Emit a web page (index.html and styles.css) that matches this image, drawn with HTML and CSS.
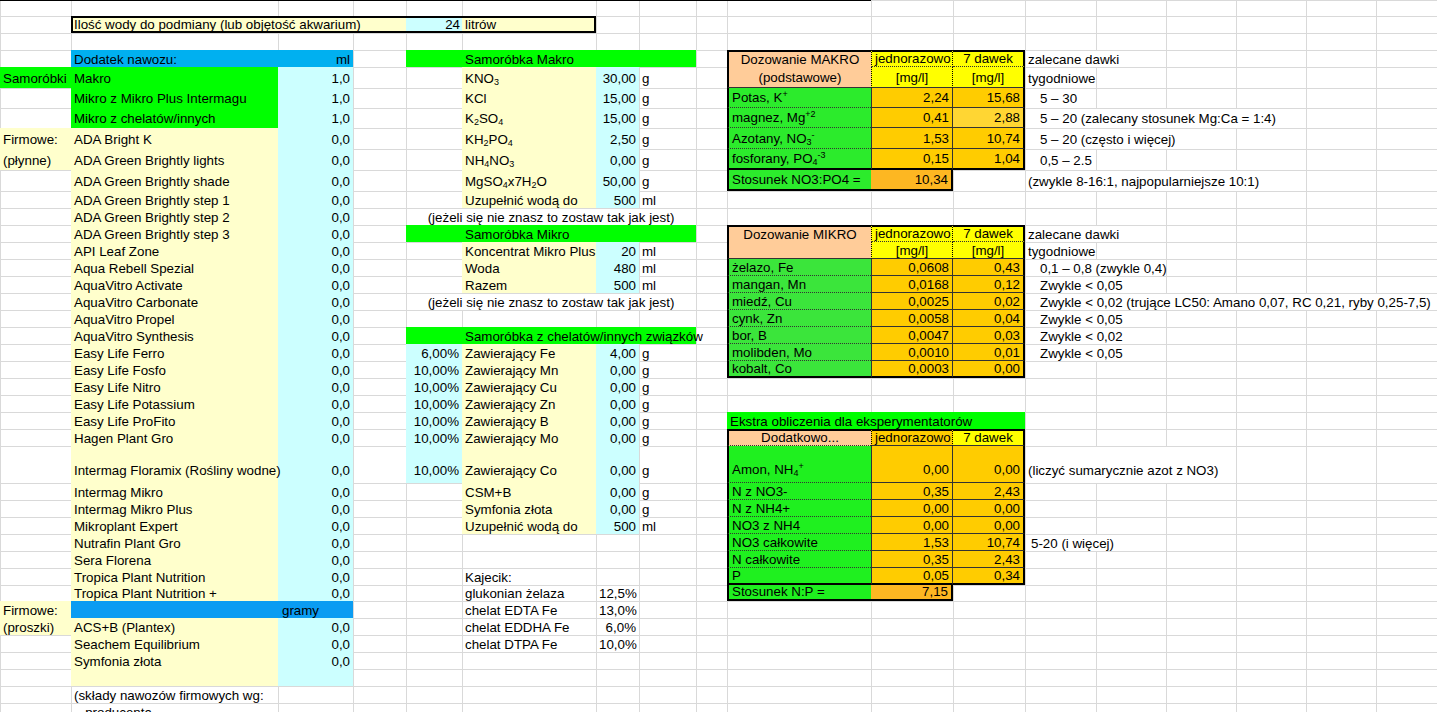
FILE: index.html
```html
<!DOCTYPE html>
<html lang="pl">
<head>
<meta charset="utf-8">
<title>Nawozy</title>
<link rel="stylesheet" href="styles.css">
</head>
<body>
<div class="topline"></div>
<table class="sheet">
<colgroup>
<col class="cA"><col class="cB"><col class="cC"><col class="cD"><col class="cE"><col class="cF"><col class="cG"><col class="cH"><col class="cI"><col class="cJ"><col class="cK"><col class="cL"><col class="cM"><col class="cN"><col class="cN"><col class="cN"><col class="cN"><col class="cN">
</colgroup>
<tbody>
<tr class="r1 h15"><td></td><td></td><td></td><td></td><td></td><td></td><td></td><td></td><td></td><td></td><td></td><td></td><td></td><td></td><td></td><td></td><td></td><td></td></tr>
<tr><td></td><td colspan="3" class="y box Bt Bb Bl">Ilość wody do podmiany (lub objętość akwarium)</td><td class="c r box Bt Bb">24</td><td class="y box Bt Bb Br">litrów</td><td></td><td></td><td></td><td></td><td></td><td></td><td></td><td></td><td></td><td></td><td></td><td></td></tr>
<tr><td></td><td></td><td></td><td></td><td></td><td></td><td></td><td></td><td></td><td></td><td></td><td></td><td></td><td></td><td></td><td></td><td></td><td></td></tr>
<tr><td></td><td class="blu">Dodatek nawozu:</td><td class="blu r">ml</td><td></td><td class="g"></td><td colspan="3" class="g">Samoróbka Makro</td><td></td><td class="pe ctr Bt Bl">Dozowanie MAKRO</td><td class="ye ctr Bt dl dr db">jednorazowo</td><td class="ye ctr Bt Br db">7 dawek</td><td colspan="2">zalecane dawki</td><td></td><td></td><td></td><td></td></tr>
<tr class="h21"><td class="g">Samoróbki</td><td class="g">Makro</td><td class="c r">1,0</td><td></td><td></td><td class="y">KNO<sub>3</sub></td><td class="c r">30,00</td><td>g</td><td></td><td class="pe ctr Bl sb">(podstawowe)</td><td class="ye ctr dl dr sb">[mg/l]</td><td class="ye ctr Br sb">[mg/l]</td><td>tygodniowe</td><td></td><td></td><td></td><td></td><td></td></tr>
<tr class="h20"><td></td><td class="g">Mikro z Mikro Plus Intermagu</td><td class="c r">1,0</td><td></td><td></td><td class="y">KCl</td><td class="c r">15,00</td><td>g</td><td></td><td class="tg Bl db">Potas, K<sup>+</sup></td><td class="or r sl sr sb">2,24</td><td class="or r Br sb">15,68</td><td class="ind">5 – 30</td><td></td><td></td><td></td><td></td><td></td></tr>
<tr class="h20"><td></td><td class="g">Mikro z chelatów/innych</td><td class="c r">1,0</td><td></td><td></td><td class="y">K<sub>2</sub>SO<sub>4</sub></td><td class="c r">15,00</td><td>g</td><td></td><td class="tg Bl db">magnez, Mg<sup>+2</sup></td><td class="or r sl sr sb">0,41</td><td class="orl r Br sb">2,88</td><td colspan="4" class="ind">5 – 20 (zalecany stosunek Mg:Ca = 1:4)</td><td></td><td></td></tr>
<tr class="h21"><td class="y">Firmowe:</td><td class="y">ADA Bright K</td><td class="c r">0,0</td><td></td><td></td><td class="y">KH<sub>2</sub>PO<sub>4</sub></td><td class="c r">2,50</td><td>g</td><td></td><td class="tg Bl db">Azotany, NO<sub>3</sub><sup>-</sup></td><td class="or r sl sr sb">1,53</td><td class="or r Br sb">10,74</td><td colspan="3" class="ind">5 – 20 (często i więcej)</td><td></td><td></td><td></td></tr>
<tr class="h21"><td class="y">(płynne)</td><td class="y">ADA Green Brightly lights</td><td class="c r">0,0</td><td></td><td></td><td class="y">NH<sub>4</sub>NO<sub>3</sub></td><td class="c r">0,00</td><td>g</td><td></td><td class="tg Bl Bb">fosforany, PO<sub>4</sub><sup>-3</sup></td><td class="or r sl sr Bb">0,15</td><td class="or r Br Bb">1,04</td><td class="ind">0,5 – 2.5</td><td></td><td></td><td></td><td></td><td></td></tr>
<tr class="h21"><td></td><td class="y">ADA Green Brightly shade</td><td class="c r">0,0</td><td></td><td></td><td class="y">MgSO<sub>4</sub>x7H<sub>2</sub>O</td><td class="c r">50,00</td><td>g</td><td></td><td class="tg Bl Bb">Stosunek NO3:PO4 =</td><td class="or2 r Br Bb">10,34</td><td></td><td colspan="4">(zwykle 8-16:1, najpopularniejsze 10:1)</td><td></td><td></td></tr>
<tr><td></td><td class="y">ADA Green Brightly step 1</td><td class="c r">0,0</td><td></td><td></td><td class="y">Uzupełnić wodą do</td><td class="c r">500</td><td>ml</td><td></td><td></td><td></td><td></td><td></td><td></td><td></td><td></td><td></td><td></td></tr>
<tr><td></td><td class="y">ADA Green Brightly step 2</td><td class="c r">0,0</td><td></td><td colspan="4" class="ctr">(jeżeli się nie znasz to zostaw tak jak jest)</td><td></td><td></td><td></td><td></td><td></td><td></td><td></td><td></td><td></td><td></td></tr>
<tr><td></td><td class="y">ADA Green Brightly step 3</td><td class="c r">0,0</td><td></td><td class="g"></td><td colspan="3" class="g">Samoróbka Mikro</td><td></td><td class="pe ctr Bt Bl">Dozowanie MIKRO</td><td class="ye ctr Bt dl dr db">jednorazowo</td><td class="ye ctr Bt Br db">7 dawek</td><td colspan="2">zalecane dawki</td><td></td><td></td><td></td><td></td></tr>
<tr><td></td><td class="y">API Leaf Zone</td><td class="c r">0,0</td><td></td><td></td><td class="y">Koncentrat Mikro Plus</td><td class="c r">20</td><td>ml</td><td></td><td class="pe Bl sb"></td><td class="ye ctr dl dr sb">[mg/l]</td><td class="ye ctr Br sb">[mg/l]</td><td>tygodniowe</td><td></td><td></td><td></td><td></td><td></td></tr>
<tr><td></td><td class="y">Aqua Rebell Spezial</td><td class="c r">0,0</td><td></td><td></td><td class="y">Woda</td><td class="c r">480</td><td>ml</td><td></td><td class="tg2 Bl db">żelazo, Fe</td><td class="or r sl sr sb">0,0608</td><td class="or r Br sb">0,43</td><td colspan="2" class="ind">0,1 – 0,8 (zwykle 0,4)</td><td></td><td></td><td></td><td></td></tr>
<tr><td></td><td class="y">AquaVitro Activate</td><td class="c r">0,0</td><td></td><td></td><td class="y">Razem</td><td class="c r">500</td><td>ml</td><td></td><td class="tg2 Bl db">mangan, Mn</td><td class="or r sl sr sb">0,0168</td><td class="or r Br sb">0,12</td><td colspan="2" class="ind">Zwykle &lt; 0,05</td><td></td><td></td><td></td><td></td></tr>
<tr><td></td><td class="y">AquaVitro Carbonate</td><td class="c r">0,0</td><td></td><td colspan="4" class="ctr">(jeżeli się nie znasz to zostaw tak jak jest)</td><td></td><td class="tg2 Bl db">miedź, Cu</td><td class="or r sl sr sb">0,0025</td><td class="or r Br sb">0,02</td><td colspan="6" class="ind">Zwykle &lt; 0,02 (trujące LC50: Amano 0,07, RC 0,21, ryby 0,25-7,5)</td></tr>
<tr><td></td><td class="y">AquaVitro Propel</td><td class="c r">0,0</td><td></td><td></td><td></td><td></td><td></td><td></td><td class="tg2 Bl db">cynk, Zn</td><td class="or r sl sr sb">0,0058</td><td class="or r Br sb">0,04</td><td colspan="2" class="ind">Zwykle &lt; 0,05</td><td></td><td></td><td></td><td></td></tr>
<tr><td></td><td class="y">AquaVitro Synthesis</td><td class="c r">0,0</td><td></td><td class="g"></td><td colspan="3" class="g">Samoróbka z chelatów/innych związków</td><td></td><td class="tg2 Bl db">bor, B</td><td class="or r sl sr sb">0,0047</td><td class="or r Br sb">0,03</td><td colspan="2" class="ind">Zwykle &lt; 0,02</td><td></td><td></td><td></td><td></td></tr>
<tr><td></td><td class="y">Easy Life Ferro</td><td class="c r">0,0</td><td></td><td class="c r">6,00%</td><td class="y">Zawierający Fe</td><td class="c r">4,00</td><td>g</td><td></td><td class="tg2 Bl db">molibden, Mo</td><td class="or r sl sr sb">0,0010</td><td class="or r Br sb">0,01</td><td colspan="2" class="ind">Zwykle &lt; 0,05</td><td></td><td></td><td></td><td></td></tr>
<tr><td></td><td class="y">Easy Life Fosfo</td><td class="c r">0,0</td><td></td><td class="c r">10,00%</td><td class="y">Zawierający Mn</td><td class="c r">0,00</td><td>g</td><td></td><td class="tg2 Bl Bb">kobalt, Co</td><td class="or r sl sr Bb">0,0003</td><td class="or r Br Bb">0,00</td><td></td><td></td><td></td><td></td><td></td><td></td></tr>
<tr><td></td><td class="y">Easy Life Nitro</td><td class="c r">0,0</td><td></td><td class="c r">10,00%</td><td class="y">Zawierający Cu</td><td class="c r">0,00</td><td>g</td><td></td><td></td><td></td><td></td><td></td><td></td><td></td><td></td><td></td><td></td></tr>
<tr><td></td><td class="y">Easy Life Potassium</td><td class="c r">0,0</td><td></td><td class="c r">10,00%</td><td class="y">Zawierający Zn</td><td class="c r">0,00</td><td>g</td><td></td><td></td><td></td><td></td><td></td><td></td><td></td><td></td><td></td><td></td></tr>
<tr><td></td><td class="y">Easy Life ProFito</td><td class="c r">0,0</td><td></td><td class="c r">10,00%</td><td class="y">Zawierający B</td><td class="c r">0,00</td><td>g</td><td></td><td colspan="3" class="g">Ekstra obliczenia dla eksperymentatorów</td><td></td><td></td><td></td><td></td><td></td><td></td></tr>
<tr><td></td><td class="y">Hagen Plant Gro</td><td class="c r">0,0</td><td></td><td class="c r">10,00%</td><td class="y">Zawierający Mo</td><td class="c r">0,00</td><td>g</td><td></td><td class="pe ctr Bt Bl db">Dodatkowo...</td><td class="or ctr Bt dl dr sb">jednorazowo</td><td class="ye ctr Bt Br sb">7 dawek</td><td></td><td></td><td></td><td></td><td></td><td></td></tr>
<tr class="h37"><td></td><td class="y">Intermag Floramix (Rośliny wodne)</td><td class="c r">0,0</td><td></td><td class="c r">10,00%</td><td class="y">Zawierający Co</td><td class="c r">0,00</td><td>g</td><td></td><td class="tg3 Bl db">Amon, NH<sub>4</sub><sup>+</sup></td><td class="or r sl sr sb">0,00</td><td class="or r Br sb">0,00</td><td colspan="3">(liczyć sumarycznie azot z NO3)</td><td></td><td></td><td></td></tr>
<tr><td></td><td class="y">Intermag Mikro</td><td class="c r">0,0</td><td></td><td></td><td class="y">CSM+B</td><td class="c r">0,00</td><td>g</td><td></td><td class="tg3 Bl db">N z NO3-</td><td class="or r sl sr sb">0,35</td><td class="or r Br sb">2,43</td><td></td><td></td><td></td><td></td><td></td><td></td></tr>
<tr><td></td><td class="y">Intermag Mikro Plus</td><td class="c r">0,0</td><td></td><td></td><td class="y">Symfonia złota</td><td class="c r">0,00</td><td>g</td><td></td><td class="tg3 Bl db">N z NH4+</td><td class="or r sl sr sb">0,00</td><td class="or r Br sb">0,00</td><td></td><td></td><td></td><td></td><td></td><td></td></tr>
<tr><td></td><td class="y">Mikroplant Expert</td><td class="c r">0,0</td><td></td><td></td><td class="y">Uzupełnić wodą do</td><td class="c r">500</td><td>ml</td><td></td><td class="tg3 Bl db">NO3 z NH4</td><td class="or r sl sr sb">0,00</td><td class="or r Br sb">0,00</td><td></td><td></td><td></td><td></td><td></td><td></td></tr>
<tr><td></td><td class="y">Nutrafin Plant Gro</td><td class="c r">0,0</td><td></td><td></td><td></td><td></td><td></td><td></td><td class="tg3 Bl db">NO3 całkowite</td><td class="or r sl sr sb">1,53</td><td class="or r Br sb">10,74</td><td colspan="2" class="ind6">5-20 (i więcej)</td><td></td><td></td><td></td><td></td></tr>
<tr><td></td><td class="y">Sera Florena</td><td class="c r">0,0</td><td></td><td></td><td></td><td></td><td></td><td></td><td class="tg3 Bl db">N całkowite</td><td class="or r sl sr sb">0,35</td><td class="or r Br sb">2,43</td><td></td><td></td><td></td><td></td><td></td><td></td></tr>
<tr><td></td><td class="y">Tropica Plant Nutrition</td><td class="c r">0,0</td><td></td><td></td><td>Kajecik:</td><td></td><td></td><td></td><td class="tg3 Bl Bb">P</td><td class="or r sl sr Bb">0,05</td><td class="or r Br Bb">0,34</td><td></td><td></td><td></td><td></td><td></td><td></td></tr>
<tr class="h16"><td></td><td class="y">Tropica Plant Nutrition +</td><td class="c r">0,0</td><td></td><td></td><td>glukonian żelaza</td><td class="r">12,5%</td><td></td><td></td><td class="tg3 Bl Bb">Stosunek N:P =</td><td class="or2 r Br Bb">7,15</td><td></td><td></td><td></td><td></td><td></td><td></td><td></td></tr>
<tr><td class="y">Firmowe:</td><td class="blu2"></td><td class="blu2 gramy">gramy</td><td></td><td></td><td>chelat EDTA Fe</td><td class="r">13,0%</td><td></td><td></td><td></td><td></td><td></td><td></td><td></td><td></td><td></td><td></td><td></td></tr>
<tr><td class="y">(proszki)</td><td class="y">ACS+B (Plantex)</td><td class="c r">0,0</td><td></td><td></td><td>chelat EDDHA Fe</td><td class="r">6,0%</td><td></td><td></td><td></td><td></td><td></td><td></td><td></td><td></td><td></td><td></td><td></td></tr>
<tr><td></td><td class="y">Seachem Equilibrium</td><td class="c r">0,0</td><td></td><td></td><td>chelat DTPA Fe</td><td class="r">10,0%</td><td></td><td></td><td></td><td></td><td></td><td></td><td></td><td></td><td></td><td></td><td></td></tr>
<tr><td></td><td class="y">Symfonia złota</td><td class="c r">0,0</td><td></td><td></td><td></td><td></td><td></td><td></td><td></td><td></td><td></td><td></td><td></td><td></td><td></td><td></td><td></td></tr>
<tr><td></td><td class="y"></td><td class="c"></td><td></td><td></td><td></td><td></td><td></td><td></td><td></td><td></td><td></td><td></td><td></td><td></td><td></td><td></td><td></td></tr>
<tr><td></td><td>(składy nawozów firmowych wg:</td><td></td><td></td><td></td><td></td><td></td><td></td><td></td><td></td><td></td><td></td><td></td><td></td><td></td><td></td><td></td><td></td></tr>
<tr><td></td><td class="ind2">- producenta</td><td></td><td></td><td></td><td></td><td></td><td></td><td></td><td></td><td></td><td></td><td></td><td></td><td></td><td></td><td></td><td></td></tr>
</tbody>
</table>
</body>
</html>
```

FILE: styles.css
```css
html, body {
  margin: 0;
  padding: 0;
  overflow: hidden;
  background: #ffffff;
}
body {
  font-family: "Liberation Sans", Arial, sans-serif;
  font-size: 13.33px;
  color: #000;
}
.topline {
  height: 1px;
  width: 1446px;
  background: linear-gradient(to right, #000 0, #000 871px, #d9d9d9 871px);
}
.sheet {
  table-layout: fixed;
  border-collapse: separate;
  border-spacing: 0;
  width: 1446px;
}
.cA { width: 71px; }
.cB { width: 207px; }
.cC { width: 75px; }
.cD { width: 53px; }
.cE { width: 56px; }
.cF { width: 134px; }
.cG { width: 43px; }
.cH { width: 57px; }
.cI { width: 31px; }
.cJ { width: 144px; }
.cK { width: 82px; }
.cL { width: 72px; }
.cM { width: 71px; }
.cN { width: 70px; }

.sheet tr { height: 17px; }
.sheet tr.h15 { height: 15px; }
.sheet tr.h16 { height: 16px; }
.sheet tr.h20 { height: 20px; }
.sheet tr.h21 { height: 21px; }
.sheet tr.h37 { height: 37px; }

.sheet td {
  padding: 0 3px;
  line-height: 14px;
  white-space: nowrap;
  vertical-align: bottom;
  overflow: visible;
  box-shadow: inset 1px 1px 0 #d9d9d9;
}
.sheet tr.r1 td { box-shadow: inset 1px 0 0 #d9d9d9; }
.sheet tr.h20 td, .sheet tr.h21 td { padding-bottom: 2px; }
.sheet tr.h37 td { padding-bottom: 5px; }

sub {
  font-size: 9px;
  line-height: 0;
  vertical-align: -2px;
}
sup {
  font-size: 9px;
  line-height: 0;
  vertical-align: 5px;
}

.r { text-align: right; }
.ctr { text-align: center; }
.sheet td.ind { padding-left: 15px; }
.sheet td.ind6 { padding-left: 6px; }
.sheet td.ind2 { padding-left: 6px; }
.sheet td.gramy { padding-left: 4px; }

.sheet td.box { line-height: 13px; }
.sheet td.box.Bl { padding-left: 1px; }
.sheet td.box.c { padding-right: 2px; }

/* fills */
.sheet td.y { background: #ffffcc; box-shadow: none; }
.sheet td.c { background: #ccffff; box-shadow: none; }
.sheet td.g { background: #00ff00; box-shadow: none; }
.sheet td.blu { background: #00b0f0; box-shadow: none; }
.sheet td.blu2 { background: #0a9cf2; box-shadow: none; }
.sheet td.pe { background: #ffcc99; box-shadow: none; }
.sheet td.ye { background: #ffff00; box-shadow: none; }
.sheet td.or { background: #ffcc00; box-shadow: none; }
.sheet td.orl { background: #ffd633; box-shadow: none; }
.sheet td.or2 { background: #fdb722; box-shadow: none; }
.sheet td.tg { background: #2ceb2c; box-shadow: none; }
.sheet td.tg2 { background: #3be53b; box-shadow: none; }
.sheet td.tg3 { background: #1ff01f; box-shadow: none; }

/* thick outer borders */
.Bt { border-top: 2px solid #000; }
.Bb { border-bottom: 2px solid #000; }
.Bl { border-left: 2px solid #000; }
.Br { border-right: 2px solid #000; }

/* dotted inner lines */
.dl { border-left: 1px dotted #000; }
.dr { border-right: 1px dotted #000; }
.db { border-bottom: 1px dotted #333; }

/* thin solid inner lines */
.sl { border-left: 1px solid #333; }
.sr { border-right: 1px solid #333; }
.sb { border-bottom: 1px solid #333; }
```
